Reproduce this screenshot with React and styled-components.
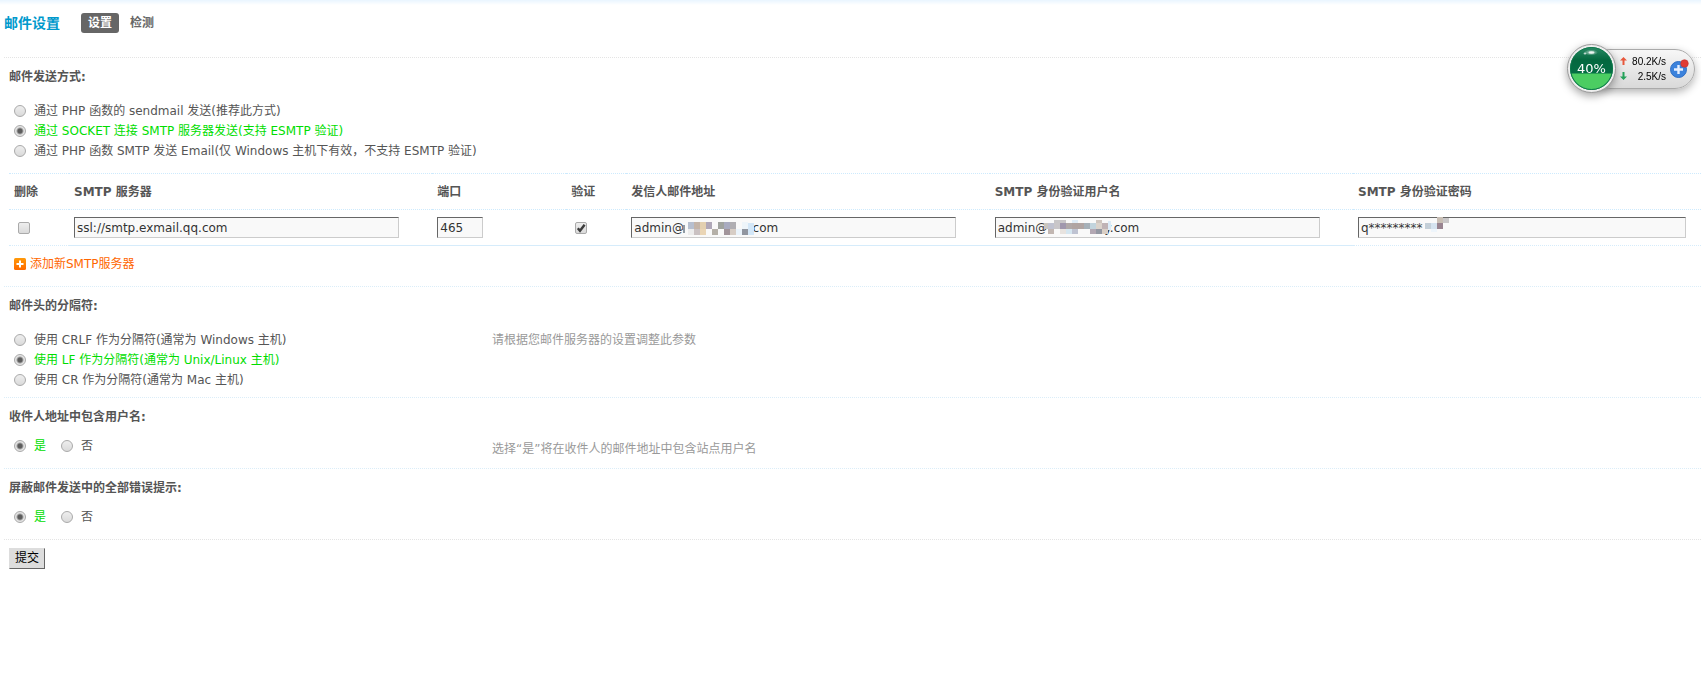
import React, { useState } from 'react';
import styled, { createGlobalStyle, css } from 'styled-components';

const GlobalStyle = createGlobalStyle`
  * {
    box-sizing: border-box;
  }

  body {
    margin: 0;

    background: #fff;
    color: #555;
    font: 12px/20px 'DejaVu Sans', 'Noto Sans CJK SC', sans-serif;
  }
`;

const Page = styled.main`
  min-height: 100vh;
  padding-left: 4px;

  background: linear-gradient(#e9f5ff, #fff 5px);
`;

const Header = styled.header`
  height: 57px;
  padding-top: 12px;

  display: flex;
  align-items: flex-start;
`;

const Title = styled.h1`
  margin: 0 21px 0 0;

  color: #0099cc;
  font-size: 14px;
  line-height: 22px;
`;

const Tabs = styled.nav`
  padding-top: 1px;

  display: flex;
  gap: 4px;
`;

const Tab = styled.a`
  padding: 0 7px;
  border-radius: 3px;

  color: ${props => (props.$current ? '#fff' : '#666')};
  background: ${props => (props.$current ? '#666' : 'transparent')};
  font-weight: bold;
  text-decoration: none;
`;

const Section = styled.section`
  padding: 9px 0 0 5px;
  border-top: 1px dotted ${props => props.$line || '#dbedf8'};
`;

const Heading = styled.h2`
  margin: 0;

  font-size: 12px;
  line-height: 20px;
`;

const Fields = styled.div`
  padding: ${props => props.$space};

  display: flex;
`;

const Options = styled.div`
  width: 483px;

  display: flex;
  flex-direction: ${props => (props.$inline ? 'row' : 'column')};
  flex-shrink: 0;
  gap: ${props => (props.$inline ? '10px' : '0')};
`;

const OptionLabel = styled.label`
  height: 20px;
  padding-left: 5px;

  display: flex;
  align-items: center;
  gap: 8px;

  color: ${props => (props.$checked ? '#00dd00' : '#555')};
  white-space: nowrap;
`;

const mark = css`
  appearance: none;
  width: 12px;
  height: 12px;
  margin: 0;
  flex-shrink: 0;

  border: 1px solid #aaa;
  background: linear-gradient(#eee, #dadada);
`;

const Radio = styled.input`
  ${mark}
  border-radius: 50%;

  &:checked {
    background: radial-gradient(#5c5c5c 0 2px, #e4e4e4 4px);
  }
`;

const CheckWrap = styled.span`
  position: relative;
  width: 12px;
  height: 12px;
  margin-left: 4px;

  display: block;

  svg {
    position: absolute;
    top: 0;
    left: 0;
    pointer-events: none;
  }
`;

const CheckInput = styled.input`
  ${mark}
  display: block;
  border-radius: 2px;
`;

const Hint = styled.p`
  margin: 0;
  padding-top: ${props => (props.$low ? '3px' : '0')};

  color: #999;
`;

const ServerTable = styled.table`
  width: 100%;

  border-spacing: 0;
  table-layout: fixed;
`;

const HeadCell = styled.th`
  width: ${props => props.$width || 'auto'};
  height: 36px;
  padding: 0 5px;
  border-top: 1px dotted #cdeafd;

  text-align: left;
`;

const Cell = styled.td`
  height: 37px;
  padding: 0 5px;
  border-top: 1px dotted #cdeafd;
  border-bottom: 1px ${props => (props.$edge ? 'dotted' : 'solid')} #d6ecfb;
`;

const InputWrap = styled.div`
  position: relative;
  width: ${props => props.$width || '92%'};

  svg {
    position: absolute;
    top: 0;
    left: 0;
    pointer-events: none;
  }
`;

const TextInput = styled.input`
  display: block;
  width: 100%;
  height: 21px;
  padding: 0 2px;
  border: 1px solid;
  border-color: #666 #ccc #ccc #666;
  border-radius: 0;

  color: #333;
  background: #f9f9f9;
  font: inherit;
`;

const AddLink = styled.a`
  padding: 8px 5px 12px;

  display: flex;
  align-items: center;
  gap: 4px;

  color: #ff6600;
  text-decoration: none;
`;

const Footer = styled.footer`
  padding: 8px 5px;
  border-top: 1px dotted #e4e4e4;
`;

const Submit = styled.button`
  display: block;
  height: 21px;
  padding: 0 5px;
  border: 1px solid;
  border-color: #ddd #666 #666 #ddd;

  color: #000;
  background: #ddd;
  font: inherit;
  line-height: 19px;
`;

const Monitor = styled.aside`
  position: fixed;
  top: 44px;
  right: 6px;

  display: flex;
  align-items: center;
`;

const Ball = styled.div`
  position: relative;
  width: 49px;
  height: 49px;
  border: 1px solid #999;
  border-radius: 50%;
  z-index: 1;

  display: flex;
  align-items: center;
  justify-content: center;

  color: #fff;
  background: #eee;
  box-shadow: 0 3px 8px rgba(0, 0, 0, 0.35);
  font-size: 13px;

  svg {
    position: absolute;
    top: 0;
    left: 0;
  }

  span {
    position: relative;
  }
`;

const Panel = styled.div`
  height: 40px;
  margin-left: -26px;
  padding: 0 5px 0 29px;
  border: 1px solid #aaa;
  border-radius: 20px;

  display: flex;
  align-items: center;
  gap: 3px;

  background: linear-gradient(#f7f7f7, #d9d9d9);
  box-shadow: 0 3px 8px rgba(0, 0, 0, 0.3);
`;

const Speeds = styled.div`
  width: 46px;
`;

const Speed = styled.div`
  display: flex;
  align-items: center;
  justify-content: space-between;

  color: #000;
  font: 10px/15px 'Liberation Sans', sans-serif;
`;

const PlusButton = styled.button`
  padding: 0;
  border: 0;

  display: flex;

  background: none;
`;

// [x, y, width, height, color]
const senderMosaic = [
  [52, 8, 2, 8, '#8f9aa3'],
  [57, 5, 6, 7, '#b7bfcf'], [63, 5, 6, 7, '#c4b4a8'], [69, 5, 6, 7, '#e3d0b0'],
  [75, 5, 6, 7, '#b0a8b8'], [87, 5, 6, 7, '#a0a39f'], [93, 5, 6, 7, '#a9abc0'],
  [99, 5, 6, 7, '#b0aeb2'], [111, 5, 6, 7, '#eef5fa'],
  [57, 12, 6, 6, '#ececec'], [63, 12, 6, 6, '#cac1c2'], [69, 12, 6, 6, '#ead5b5'],
  [81, 12, 6, 6, '#b5b0a8'], [93, 12, 6, 6, '#a2959b'], [99, 12, 6, 6, '#d7cdc5'],
  [105, 12, 6, 6, '#eaf3fb'], [111, 12, 6, 6, '#9196a0'], [117, 6, 6, 12, '#d3e7f8'],
];

const userMosaic = [
  [59, 3, 12, 3, '#c8c6c8'], [77, 3, 6, 3, '#deebf6'], [101, 3, 6, 3, '#cfc6bf'],
  [49, 6, 4, 6, '#c9c5be'], [53, 6, 6, 6, '#c0c2d0'], [59, 6, 6, 6, '#c9c6c9'],
  [65, 6, 6, 6, '#a097ad'], [71, 6, 6, 6, '#b0a8a8'], [77, 6, 12, 6, '#b0a4a2'],
  [89, 6, 6, 6, '#a6b0b8'], [95, 6, 6, 6, '#c2d4dd'], [101, 6, 6, 6, '#dbd3cb'],
  [107, 6, 6, 6, '#c0b3b5'], [113, 4, 3, 9, '#dcebf7'],
  [53, 12, 6, 5, '#c2b7b2'], [65, 12, 6, 5, '#e8e3df'], [71, 12, 6, 5, '#d5e6f0'],
  [77, 12, 6, 5, '#bfc3d2'], [95, 12, 6, 5, '#b3a8b3'], [101, 12, 6, 5, '#9498a3'],
  [107, 12, 6, 5, '#d9cfc6'],
];

const passwordMosaic = [
  [79, 0, 6, 6, '#c8beb4'], [85, 1, 6, 5, '#c9c7c8'],
  [67, 6, 6, 6, '#c3cfd8'], [73, 6, 6, 6, '#d5e3ef'], [79, 6, 6, 6, '#998490'],
  [73, 12, 6, 3, '#eef5fb'],
];

const gap = count => ' '.repeat(count);

const columns = [
  { title: '删除', width: '60px' },
  { title: 'SMTP 服务器' },
  { title: '端口', width: '134px' },
  { title: '验证', width: '60px' },
  { title: '发信人邮件地址' },
  { title: 'SMTP 身份验证用户名' },
  { title: 'SMTP 身份验证密码', width: '348px' },
];

const Field = ({ label, value, width, mosaic }) => (
  <InputWrap $width={width}>
    <TextInput type="text" aria-label={label} defaultValue={value} />
    {mosaic && (
      <svg width="130" height="21" aria-hidden="true">
        {mosaic.map(([x, y, w, h, fill]) => (
          <rect key={`${x}-${y}`} x={x} y={y} width={w} height={h} fill={fill} />
        ))}
      </svg>
    )}
  </InputWrap>
);

const Check = ({ label, initial = false }) => {
  const [checked, setChecked] = useState(initial);
  return (
    <CheckWrap>
      <CheckInput
        type="checkbox"
        aria-label={label}
        checked={checked}
        onChange={event => setChecked(event.target.checked)}
      />
      {checked && (
        <svg width="12" height="12" viewBox="0 0 12 12" aria-hidden="true">
          <path d="M2.8 6.2l2.2 2.6 4.6-6" fill="none" stroke="#3c3c3c" strokeWidth="2.4" />
        </svg>
      )}
    </CheckWrap>
  );
};

const RadioGroup = ({ name, labels, initial, inline }) => {
  const [selected, setSelected] = useState(initial);
  return (
    <Options $inline={inline} role="radiogroup">
      {labels.map((label, index) => (
        <OptionLabel key={label} $checked={selected === index}>
          <Radio
            type="radio"
            name={name}
            checked={selected === index}
            onChange={() => setSelected(index)}
          />
          {label}
        </OptionLabel>
      ))}
    </Options>
  );
};

const SpeedMonitor = () => (
  <Monitor>
    <Ball>
      <svg width="47" height="47" viewBox="0 0 47 47" aria-hidden="true">
        <defs>
          <linearGradient id="ball" x1="0" y1="0" x2="0" y2="1">
            <stop offset="0" stopColor="#2b8a66" />
            <stop offset="0.3" stopColor="#04683f" />
            <stop offset="1" stopColor="#04754a" />
          </linearGradient>
          <radialGradient id="shine">
            <stop offset="0" stopColor="#fff" stopOpacity="0.7" />
            <stop offset="1" stopColor="#fff" stopOpacity="0" />
          </radialGradient>
        </defs>
        <circle cx="23.5" cy="23.5" r="21.5" fill="url(#ball)" />
        <path d="M3.2 28.5h40.6a20.8 20.8 0 0 1-40.6 0z" fill="#4bcd62" />
        <circle cx="23.5" cy="23.5" r="21" fill="none" stroke="#0e7a4c" />
        <ellipse cx="23" cy="7.5" rx="7" ry="3" fill="url(#shine)" />
        <ellipse cx="23.5" cy="7.5" rx="3" ry="1.2" fill="#fff" opacity="0.8" />
        <ellipse cx="17" cy="8.5" rx="1.4" ry="1" fill="#fff" opacity="0.7" />
      </svg>
      <span>40%</span>
    </Ball>
    <Panel>
      <Speeds>
        <Speed>
          <svg width="7" height="8" viewBox="0 0 7 8" aria-hidden="true">
            <path d="M3.5 0L7 3.5H4.5V8h-2V3.5H0z" fill="#e8583c" />
          </svg>
          80.2K/s
        </Speed>
        <Speed>
          <svg width="7" height="8" viewBox="0 0 7 8" aria-hidden="true">
            <path d="M3.5 8L0 4.5h2.5V0h2v4.5H7z" fill="#24a35a" />
          </svg>
          2.5K/s
        </Speed>
      </Speeds>
      <PlusButton type="button" aria-label="加速">
        <svg width="20" height="20" viewBox="0 0 20 20" aria-hidden="true">
          <circle cx="9.5" cy="10.5" r="8" fill="#3b82dc" stroke="#2f6fc4" />
          <path d="M9.5 6v9M5 10.5h9" stroke="#e6f0ff" strokeWidth="2.4" />
          <circle cx="15.5" cy="4.5" r="3.8" fill="#e03a34" stroke="#c03030" strokeWidth="0.6" />
        </svg>
      </PlusButton>
    </Panel>
  </Monitor>
);

const App = () => (
  <>
    <GlobalStyle />
    <Page>
      <Header>
        <Title>邮件设置</Title>
        <Tabs>
          <Tab href="#setting" $current>设置</Tab>
          <Tab href="#check">检测</Tab>
        </Tabs>
      </Header>

      <Section $line="#e4e4e4">
        <Heading>邮件发送方式:</Heading>
        <Fields $space="14px 0 12px">
          <RadioGroup
            name="mailsend"
            initial={1}
            labels={[
              '通过 PHP 函数的 sendmail 发送(推荐此方式)',
              '通过 SOCKET 连接 SMTP 服务器发送(支持 ESMTP 验证)',
              '通过 PHP 函数 SMTP 发送 Email(仅 Windows 主机下有效，不支持 ESMTP 验证)',
            ]}
          />
        </Fields>
        <ServerTable>
          <thead>
            <tr>
              {columns.map(({ title, width }) => (
                <HeadCell key={title} scope="col" $width={width}>{title}</HeadCell>
              ))}
            </tr>
          </thead>
          <tbody>
            <tr>
              <Cell $edge><Check label="删除" /></Cell>
              <Cell><Field label="SMTP 服务器" value="ssl://smtp.exmail.qq.com" /></Cell>
              <Cell><Field label="端口" value="465" width="46px" /></Cell>
              <Cell><Check label="验证" initial /></Cell>
              <Cell>
                <Field label="发信人邮件地址" value={`admin@${gap(18)}com`} mosaic={senderMosaic} />
              </Cell>
              <Cell>
                <Field label="SMTP 身份验证用户名" value={`admin@${gap(15)}y.com`} mosaic={userMosaic} />
              </Cell>
              <Cell $edge>
                <Field label="SMTP 身份验证密码" value="q*********" width="97%" mosaic={passwordMosaic} />
              </Cell>
            </tr>
          </tbody>
        </ServerTable>
        <AddLink href="#add">
          <svg width="12" height="12" viewBox="0 0 12 12" aria-hidden="true">
            <defs>
              <linearGradient id="add" x1="0" y1="0" x2="0" y2="1">
                <stop offset="0" stopColor="#ff9a0a" />
                <stop offset="1" stopColor="#ff6a00" />
              </linearGradient>
            </defs>
            <rect width="12" height="12" rx="1.5" fill="url(#add)" />
            <path d="M6 2.5v7M2.5 6h7" stroke="#fff" strokeWidth="2" />
          </svg>
          添加新SMTP服务器
        </AddLink>
      </Section>

      <Section>
        <Heading>邮件头的分隔符:</Heading>
        <Fields $space="14px 0 7px">
          <RadioGroup
            name="maildelimiter"
            initial={1}
            labels={[
              '使用 CRLF 作为分隔符(通常为 Windows 主机)',
              '使用 LF 作为分隔符(通常为 Unix/Linux 主机)',
              '使用 CR 作为分隔符(通常为 Mac 主机)',
            ]}
          />
          <Hint>请根据您邮件服务器的设置调整此参数</Hint>
        </Fields>
      </Section>

      <Section>
        <Heading>收件人地址中包含用户名:</Heading>
        <Fields $space="9px 0">
          <RadioGroup name="mailusername" initial={0} labels={['是', '否']} inline />
          <Hint $low>选择“是”将在收件人的邮件地址中包含站点用户名</Hint>
        </Fields>
      </Section>

      <Section>
        <Heading>屏蔽邮件发送中的全部错误提示:</Heading>
        <Fields $space="9px 0 12px">
          <RadioGroup name="sendmailsilent" initial={0} labels={['是', '否']} inline />
        </Fields>
      </Section>

      <Footer>
        <Submit type="submit">提交</Submit>
      </Footer>
    </Page>
    <SpeedMonitor />
  </>
);

export default App;
